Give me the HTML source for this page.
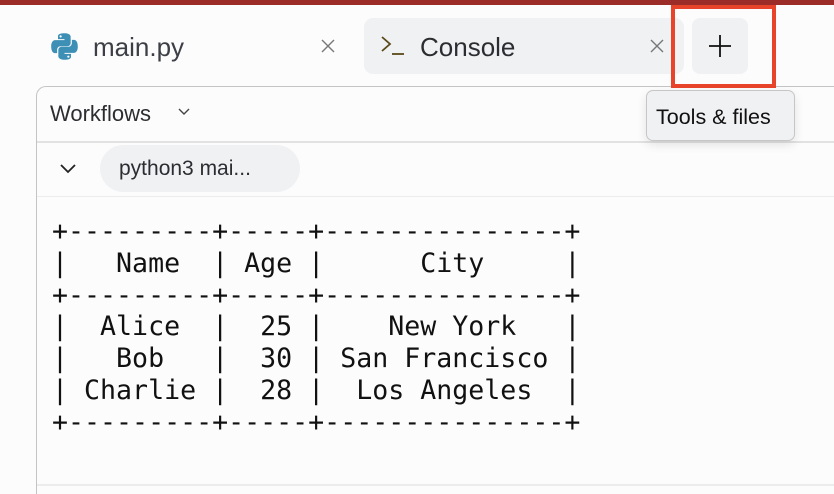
<!DOCTYPE html>
<html><head><style>
*{margin:0;padding:0;box-sizing:border-box}
html,body{width:834px;height:494px;overflow:hidden}
body{background:#fcfcfc;position:relative;font-family:"Liberation Sans","DejaVu Sans",sans-serif;color:#2b2d31}
.abs{position:absolute}
</style></head><body>
<div class="abs" style="left:0;top:0;width:834px;height:5px;background:#9c2c27"></div>
<svg class="abs" style="left:50px;top:32px" width="29" height="29" viewBox="0 0 24 24">
<path d="M11.9 1C6.3 1 6.6 3.4 6.6 3.4v2.5h5.4v.8H4.5S1 6.3 1 12s3.1 5.5 3.1 5.5h1.8v-2.6s-.1-3.1 3-3.1h5.3s2.9 0 2.9-2.8V4.1S17.5 1 11.9 1z" fill="#3d8fb5"/>
<path d="M12.1 23c5.6 0 5.3-2.4 5.3-2.4v-2.5H12v-.8h7.5S23 17.7 23 12s-3.1-5.5-3.1-5.5h-1.8v2.6s.1 3.1-3 3.1H9.8s-2.9 0-2.9 2.8v4.9S6.5 23 12.1 23z" fill="#3d8fb5"/>
<circle cx="8.8" cy="3.6" r=".9" fill="#fff"/><circle cx="15.2" cy="20.4" r=".9" fill="#fff"/>
</svg>
<div class="abs" style="left:93px;top:32px;font-size:26px;color:#3c3f45">main.py</div>
<svg class="abs" style="left:320px;top:38px" width="16" height="16" viewBox="0 0 16 16"><path d="M2 2L14 14M14 2L2 14" stroke="#777" stroke-width="1.4"/></svg>
<div class="abs" style="left:364px;top:18px;width:320px;height:56px;background:#f0f1f3;border-radius:9px"></div>
<svg class="abs" style="left:380px;top:34px" width="26" height="24" viewBox="0 0 26 24"><path d="M2 3L10 10L2 17" stroke="#5a4a1a" stroke-width="1.8" fill="none"/><path d="M12 20H24" stroke="#5a4a1a" stroke-width="1.8"/></svg>
<div class="abs" style="left:420px;top:32px;font-size:26px;color:#2b2d31">Console</div>
<svg class="abs" style="left:649px;top:38px" width="16" height="16" viewBox="0 0 16 16"><path d="M2 2L14 14M14 2L2 14" stroke="#777" stroke-width="1.4"/></svg>
<div class="abs" style="left:692px;top:18px;width:56px;height:56px;background:#f0f1f3;border-radius:8px"></div>
<svg class="abs" style="left:708px;top:34px" width="24" height="24" viewBox="0 0 24 24"><path d="M12 1V23M1 12H23" stroke="#111" stroke-width="1.8"/></svg>
<div class="abs" style="left:36px;top:86px;width:820px;height:430px;border:1px solid #c4c4c4;border-radius:10px 0 0 0;border-right:none"></div>
<div class="abs" style="left:671px;top:5px;width:105px;height:83px;border:4px solid #e8442b"></div>
<div class="abs" style="left:37px;top:141px;width:797px;height:2px;background:#e2e2e2"></div>
<div class="abs" style="left:37px;top:196px;width:797px;height:1px;background:#ececec"></div>
<div class="abs" style="left:37px;top:484px;width:797px;height:2px;background:#ececec"></div>
<div class="abs" style="left:50px;top:101px;font-size:22px;color:#2b2d31">Workflows</div>
<svg class="abs" style="left:177px;top:107px" width="14" height="10" viewBox="0 0 14 10"><path d="M2 2L7 7L12 2" stroke="#444" stroke-width="1.4" fill="none"/></svg>
<svg class="abs" style="left:59px;top:163px" width="18" height="12" viewBox="0 0 18 12"><path d="M2 2L9 9L16 2" stroke="#222" stroke-width="1.8" fill="none"/></svg>
<div class="abs" style="left:100px;top:145px;width:200px;height:47px;background:#f0f1f3;border-radius:24px"></div>
<div class="abs" style="left:119px;top:157px;font-size:21px;color:#2b2d31">python3 mai...</div>
<div class="abs" style="left:646px;top:90px;width:149px;height:51px;background:#f0f1f3;border:1.5px solid #c6c6c6;border-radius:7px;box-shadow:0 4px 10px rgba(0,0,0,.1)"></div>
<div class="abs" style="left:656px;top:105px;font-size:21.5px;color:#111">Tools &amp; files</div>
<pre class="abs" style="left:52px;top:216px;font-family:'DejaVu Sans Mono','Liberation Mono',monospace;font-size:26.6px;line-height:31.8px;color:#111">+---------+-----+---------------+
|   Name  | Age |      City     |
+---------+-----+---------------+
|  Alice  |  25 |    New York   |
|   Bob   |  30 | San Francisco |
| Charlie |  28 |  Los Angeles  |
+---------+-----+---------------+</pre>
</body></html>
